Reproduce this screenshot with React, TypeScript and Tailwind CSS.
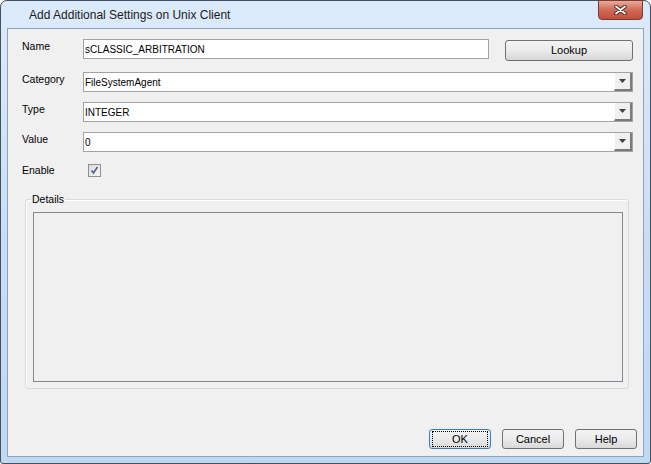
const font = { fontFamily: '"Liberation Sans", Arial, sans-serif' };

function DropArrow() {
  return (
    <div className="flex h-full w-[18px] items-center justify-center border-l border-l-[#ffffff] border-r-2 border-b-2 border-r-[#7a7a7a] border-b-[#7a7a7a] bg-[#f0f0f0]">
      <svg width="7" height="4" viewBox="0 0 7 4">
        <path d="M0 0h7L3.5 4z" fill="#404040" />
      </svg>
    </div>
  );
}

function Combo({ value }: { value: string }) {
  return (
    <div className="flex h-[20px] w-[550px] border border-[#a3a3a3] bg-white">
      <div className="flex flex-1 items-center pl-[1px] text-[10px] text-black">{value}</div>
      <DropArrow />
    </div>
  );
}

function Label({ children }: { children: string }) {
  return <div className="w-[61px] pt-[1px] text-[10.5px] leading-[12px] text-black">{children}</div>;
}

function Btn({ children, focused }: { children: string; focused?: boolean }) {
  return (
    <button
      className={
        "flex h-[20px] w-[62px] items-center justify-center rounded-[3px] border bg-gradient-to-b from-[#f4f4f4] via-[#ebebeb] to-[#d9d9d9] text-[11px] text-black " +
        (focused ? "border-[#3c7fb1]" : "border-[#707070]")
      }
    >
      <span
        className={
          "flex h-[16px] w-[56px] items-center justify-center " +
          (focused ? "border border-dotted border-black" : "")
        }
      >
        {children}
      </span>
    </button>
  );
}

export default function App() {
  return (
    <div style={font} className="h-[464px] w-[651px] bg-white">
      <div className="flex h-full w-full flex-col rounded-t-[7px] rounded-b-[3px] border border-[#44505c] bg-gradient-to-b from-[#dcebfb] via-[#c9def5] to-[#c0d8f2]">
        {/* title bar */}
        <div className="relative flex h-[27px] items-center pl-[28px]">
          <span className="text-[12px] text-[#1a1a1a]">Add Additional Settings on Unix Client</span>
          <div className="absolute right-[7px] top-[-1px] flex h-[20px] w-[45px] items-center justify-center rounded-b-[4px] border border-[#7a3a30] bg-gradient-to-b from-[#e8aa9c] via-[#d06a58] to-[#c24e3a]">
            <svg width="13" height="10" viewBox="0 0 13 10">
              <path d="M2 1.5l9 7M11 1.5l-9 7" stroke="#4a2520" strokeWidth="3.6" strokeLinecap="round" />
              <path d="M2 1.5l9 7M11 1.5l-9 7" stroke="#ffffff" strokeWidth="1.8" strokeLinecap="round" />
            </svg>
          </div>
        </div>

        {/* client area */}
        <div className="mx-[6px] mb-[6px] flex flex-1 flex-col border border-[#8ea3b8] bg-[#f0f0f0]">
          <div className="flex flex-col pl-[14px] pt-[10px]">
            <div className="flex items-start">
              <Label>Name</Label>
              <div className="flex h-[20px] w-[406px] items-center border border-[#a3a3a3] bg-white pl-[1px] text-[10px]">
                sCLASSIC_ARBITRATION
              </div>
              <button className="ml-[16px] mt-[1px] flex h-[21px] w-[128px] items-center justify-center rounded-[3px] border border-[#707070] bg-gradient-to-b from-[#f4f4f4] via-[#ebebeb] to-[#d6d6d6] text-[11px] text-black">
                Lookup
              </button>
            </div>
            <div className="mt-[11px] flex items-start">
              <Label>Category</Label>
              <Combo value="FileSystemAgent" />
            </div>
            <div className="mt-[10px] flex items-start">
              <Label>Type</Label>
              <Combo value="INTEGER" />
            </div>
            <div className="mt-[10px] flex items-start">
              <Label>Value</Label>
              <Combo value="0" />
            </div>
            <div className="mt-[12px] flex items-start">
              <div className="w-[66px] text-[10.5px] leading-[12px] text-black">Enable</div>
              <div className="flex h-[13px] w-[13px] items-center justify-center border border-[#8f8f8f] bg-gradient-to-br from-[#dcdcdc] to-[#f6f6f6]">
                <svg width="9" height="9" viewBox="0 0 9 9">
                  <path d="M1.5 4.5l2 2.5L7.5 1" fill="none" stroke="#4c5f94" strokeWidth="1.6" />
                </svg>
              </div>
            </div>
          </div>

          {/* details group */}
          <div className="relative ml-[17px] mt-[22px] h-[190px] w-[604px] rounded-[3px] border border-[#d5dbe0] shadow-[inset_1px_1px_0_#ffffff]">
            <span className="absolute left-[5px] top-[-7px] bg-[#f0f0f0] px-[1px] text-[10.5px] leading-[12px] text-black">
              Details
            </span>
            <div className="ml-[7px] mt-[12px] h-[170px] w-[590px] border border-[#828790] bg-[#f0f0f0]" />
          </div>

          <div className="flex-1" />
          <div className="flex justify-end gap-[11px] pb-[7px] pr-[6px]">
            <Btn focused>OK</Btn>
            <Btn>Cancel</Btn>
            <Btn>Help</Btn>
          </div>
        </div>
      </div>
    </div>
  );
}
